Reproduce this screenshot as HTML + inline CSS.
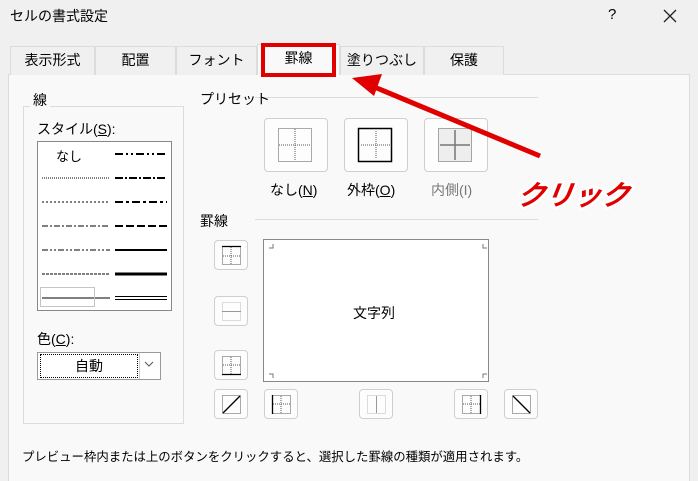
<!DOCTYPE html>
<html style="height:481px;overflow:hidden"><head><meta charset="utf-8"><style>
*{margin:0;padding:0;box-sizing:border-box}
body{width:698px;height:481px;background:#f0f0f0;font-family:"Liberation Sans","Noto Sans CJK JP",sans-serif;color:#000;position:relative;overflow:hidden;font-size:13px}
.a{position:absolute;white-space:nowrap}
.tab{position:absolute;top:46px;height:29px;border:1px solid #dcdcdc;border-bottom:none;background:#f0f0f0;text-align:center;line-height:27px;font-size:14px}
.btn{position:absolute;border:1px solid #cfcfcf;border-radius:4px;background:#fdfdfd}
</style></head><body>
<div class="a" style="left:10px;top:6px;font-size:14px">セルの書式設定</div>
<div class="a" style="left:608px;top:6px;font-size:15px">?</div>
<svg class="a" style="left:662px;top:8px" width="16" height="16"><path d="M2 2L14 14M14 2L2 14" stroke="#222" stroke-width="1.3"/></svg>
<div class="a" style="left:8px;top:74px;width:682px;height:407px;background:#f9f9f9;border:1px solid #dcdcdc;border-bottom:none"></div>
<div class="tab" style="left:10px;width:85px">表示形式</div>
<div class="tab" style="left:95px;width:81px">配置</div>
<div class="tab" style="left:176px;width:81px">フォント</div>
<div class="tab" style="left:257px;width:83px;background:#f9f9f9;top:44px;height:31px">罫線</div>
<div class="tab" style="left:340px;width:84px">塗りつぶし</div>
<div class="tab" style="left:424px;width:80px">保護</div>
<div class="a" style="left:261px;top:43px;width:75px;height:34px;border:4px solid #e00000"></div>

<div class="a" style="left:23px;top:106px;width:161px;height:318px;border:1px solid #dcdcdc"></div>
<div class="a" style="left:30px;top:90px;background:#f9f9f9;padding:0 3px;font-size:14px">線</div>
<div class="a" style="left:37px;top:119px;font-size:14px">スタイル(<u>S</u>):</div>
<div class="a" style="left:37px;top:141px;width:135px;height:170px;background:#fff;border:1px solid #888"></div>
<div class="a" style="left:56px;top:146px;font-size:13px">なし</div>
<svg class="a" style="left:37px;top:141px" width="135" height="170">
<g fill="none" stroke="#000">
<line x1="5" y1="37" x2="73" y2="37" stroke-dasharray="1 1"/>
<line x1="5" y1="61" x2="73" y2="61" stroke-dasharray="2 2"/>
<line x1="5" y1="85" x2="73" y2="85" stroke-dasharray="6 2 2 2"/>
<line x1="5" y1="109" x2="73" y2="109" stroke-dasharray="6 2 2 2 2 2"/>
<line x1="5" y1="133" x2="73" y2="133" stroke-dasharray="3 1"/>
<line x1="5" y1="157" x2="73" y2="157" stroke-width="1"/>
<rect x="3.5" y="146.5" width="54" height="19" stroke="#888" stroke-dasharray="1 1"/>
<line x1="78" y1="13" x2="130" y2="13" stroke-width="2" stroke-dasharray="8 3 2 3 2 3"/>
<line x1="78" y1="37" x2="130" y2="37" stroke-width="2" stroke-dasharray="8 2 2 2"/>
<line x1="78" y1="61" x2="130" y2="61" stroke-width="2" stroke-dasharray="8 3 3 3"/>
<line x1="78" y1="85" x2="130" y2="85" stroke-width="2" stroke-dasharray="8 3"/>
<line x1="78" y1="109" x2="130" y2="109" stroke-width="2"/>
<line x1="78" y1="133" x2="130" y2="133" stroke-width="3"/>
<line x1="78" y1="155.5" x2="130" y2="155.5"/><line x1="78" y1="158.5" x2="130" y2="158.5"/>
</g></svg>
<div class="a" style="left:37px;top:329px;font-size:14px">色(<u>C</u>):</div>
<div class="a" style="left:37px;top:352px;width:124px;height:28px;background:#fff;border:1px solid #999"></div>
<div class="a" style="left:40px;top:354px;width:98px;height:24px;border:1px dotted #000;text-align:center;line-height:22px;font-size:14px">自動</div>
<div class="a" style="left:139px;top:353px;width:1px;height:26px;background:#ccc"></div>
<svg class="a" style="left:144px;top:361px" width="10" height="6"><path d="M1 1L5 5L9 1" stroke="#555" fill="none"/></svg>

<div class="a" style="left:255px;top:97px;width:283px;height:1px;background:#dcdcdc"></div>
<div class="a" style="left:200px;top:89px;font-size:14px">プリセット</div>
<div class="a" style="left:255px;top:219px;width:283px;height:1px;background:#dcdcdc"></div>
<div class="a" style="left:200px;top:211px;font-size:14px">罫線</div>

<div class="btn" style="left:264px;top:118px;width:64px;height:54px"></div>
<div class="btn" style="left:344px;top:118px;width:64px;height:54px"></div>
<div class="btn" style="left:424px;top:118px;width:64px;height:54px"></div>
<svg class="a" style="left:0;top:0" width="698" height="481">
<g fill="none" stroke="#555" stroke-dasharray="1 1">
<rect x="278.5" y="128.5" width="33" height="33"/><line x1="295" y1="129" x2="295" y2="161"/><line x1="279" y1="145" x2="311" y2="145"/>
<line x1="376" y1="131" x2="376" y2="159"/><line x1="361" y1="145" x2="391" y2="145"/>
<rect x="438.5" y="128.5" width="33" height="33" fill="#eee"/>
</g>
<rect x="358.5" y="128.5" width="33" height="33" fill="none" stroke="#000" stroke-width="1.5"/>
<path d="M455 130V160M440 145H470" stroke="#777" stroke-width="1.5"/>
</svg>
<div class="a" style="left:270px;top:180px;font-size:14px">なし(<u>N</u>)</div>
<div class="a" style="left:347px;top:180px;font-size:14px">外枠(<u>O</u>)</div>
<div class="a" style="left:431px;top:180px;font-size:14px;color:#777">内側(I)</div>

<div class="a" style="left:263px;top:239px;width:226px;height:143px;background:#fff;border:1px solid #888"></div>
<div class="a" style="left:353px;top:303px;font-size:14px">文字列</div>
<svg class="a" style="left:0;top:0" width="698" height="481">
<g fill="none" stroke="#777"><path d="M269 248H273V244M483 244V248H487M269 374H273V378M483 378V374H487"/></g>
</svg>
<div class="btn" style="left:214px;top:240px;width:34px;height:30px"></div>
<div class="btn" style="left:214px;top:296px;width:34px;height:30px"></div>
<div class="btn" style="left:214px;top:350px;width:34px;height:30px"></div>
<div class="btn" style="left:214px;top:389px;width:34px;height:30px"></div>
<div class="btn" style="left:264px;top:389px;width:34px;height:30px"></div>
<div class="btn" style="left:359px;top:389px;width:34px;height:30px"></div>
<div class="btn" style="left:454px;top:389px;width:34px;height:30px"></div>
<div class="btn" style="left:504px;top:389px;width:34px;height:30px"></div>
<svg class="a" style="left:0;top:0" width="698" height="481">
<g fill="none" stroke="#555" stroke-dasharray="1 1">
<rect x="222.5" y="246.5" width="18" height="18"/><line x1="231" y1="247" x2="231" y2="264"/><line x1="223" y1="256" x2="240" y2="256"/>
<rect x="222.5" y="302.5" width="18" height="18" stroke="#bbb"/>
<rect x="222.5" y="356.5" width="18" height="18"/><line x1="231" y1="357" x2="231" y2="374"/><line x1="223" y1="365" x2="240" y2="365"/>
<rect x="222.5" y="395.5" width="18" height="18"/>
<rect x="272.5" y="395.5" width="18" height="18"/><line x1="281" y1="396" x2="281" y2="413"/><line x1="273" y1="404" x2="290" y2="404"/>
<rect x="367.5" y="395.5" width="18" height="18" stroke="#bbb"/>
<rect x="462.5" y="395.5" width="18" height="18"/><line x1="471" y1="396" x2="471" y2="413"/><line x1="463" y1="404" x2="480" y2="404"/>
<rect x="512.5" y="395.5" width="18" height="18"/>
</g>
<g stroke="#000" stroke-width="1.3">
<line x1="222" y1="246.5" x2="241" y2="246.5"/>
<line x1="222" y1="374.5" x2="241" y2="374.5"/>
<line x1="223" y1="413" x2="240" y2="396"/>
<line x1="272.5" y1="395" x2="272.5" y2="414"/>
<line x1="480.5" y1="395" x2="480.5" y2="414"/>
<line x1="513" y1="396" x2="530" y2="413"/>
</g>
<line x1="222" y1="311.5" x2="241" y2="311.5" stroke="#999"/>
<line x1="376.5" y1="396" x2="376.5" y2="413" stroke="#999"/>
<path d="M540 156L372 86" stroke="#e00000" stroke-width="5"/>
<path d="M352 78L382 74L374 96Z" fill="#e00000"/>
<text x="518" y="205" font-family="Liberation Sans,Noto Sans CJK JP,sans-serif" font-size="28" font-weight="bold" font-style="italic" fill="#e00000" stroke="#fff" stroke-width="5" paint-order="stroke" transform="skewX(-8) translate(27 0)">クリック</text>
</svg>
<div class="a" style="left:22px;top:447px;font-size:12.4px">プレビュー枠内または上のボタンをクリックすると、選択した罫線の種類が適用されます。</div>
</body></html>
